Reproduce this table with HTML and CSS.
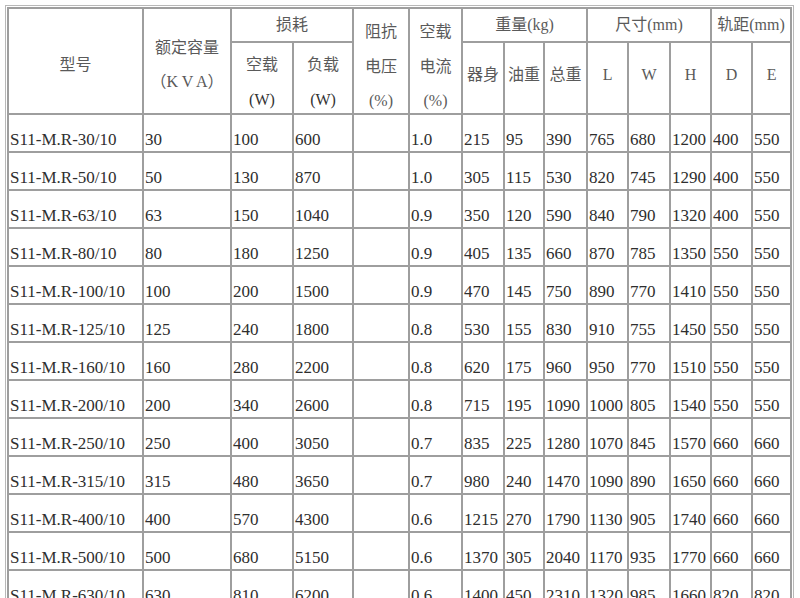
FILE: index.html
```html
<!DOCTYPE html>
<html lang="zh">
<head>
<meta charset="utf-8">
<title>S11-M.R 变压器参数表</title>
<link rel="stylesheet" href="styles.css">
</head>
<body>
<div class="frame">
<table class="spec">
<colgroup>
<col class="c-model"><col class="c-kva"><col class="c-nl"><col class="c-ll"><col class="c-imp"><col class="c-cur">
<col class="c-body"><col class="c-oil"><col class="c-tot"><col class="c-l"><col class="c-w"><col class="c-h"><col class="c-d"><col class="c-e">
</colgroup>
<thead>
<tr>
<th rowspan="2" class="hd tall"><span class="one">型号</span></th>
<th rowspan="2" class="hd tall"><span class="kva1">额定容量</span><span class="kva2">（K V A）</span></th>
<th colspan="2" class="hd top">损耗</th>
<th rowspan="2" class="hd tall"><span class="s1">阻抗</span><span class="s2">电压</span><span class="s3">(%)</span></th>
<th rowspan="2" class="hd tall"><span class="s1">空载</span><span class="s2">电流</span><span class="s3">(%)</span></th>
<th colspan="3" class="hd top">重量(kg)</th>
<th colspan="3" class="hd top">尺寸(mm)</th>
<th colspan="2" class="hd top">轨距(mm)</th>
</tr>
<tr>
<th class="hd sub2"><span class="w1">空载</span><span class="w2">(W)</span></th>
<th class="hd sub2"><span class="w1">负载</span><span class="w2">(W)</span></th>
<th class="hd sub">器身</th>
<th class="hd sub">油重</th>
<th class="hd sub">总重</th>
<th class="hd sub">L</th>
<th class="hd sub">W</th>
<th class="hd sub">H</th>
<th class="hd sub">D</th>
<th class="hd sub">E</th>
</tr>
</thead>
<tbody>
<tr><td>S11-M.R-30/10</td><td>30</td><td>100</td><td>600</td><td></td><td>1.0</td><td>215</td><td>95</td><td>390</td><td>765</td><td>680</td><td>1200</td><td>400</td><td>550</td></tr>
<tr><td>S11-M.R-50/10</td><td>50</td><td>130</td><td>870</td><td></td><td>1.0</td><td>305</td><td>115</td><td>530</td><td>820</td><td>745</td><td>1290</td><td>400</td><td>550</td></tr>
<tr><td>S11-M.R-63/10</td><td>63</td><td>150</td><td>1040</td><td></td><td>0.9</td><td>350</td><td>120</td><td>590</td><td>840</td><td>790</td><td>1320</td><td>400</td><td>550</td></tr>
<tr><td>S11-M.R-80/10</td><td>80</td><td>180</td><td>1250</td><td></td><td>0.9</td><td>405</td><td>135</td><td>660</td><td>870</td><td>785</td><td>1350</td><td>550</td><td>550</td></tr>
<tr><td>S11-M.R-100/10</td><td>100</td><td>200</td><td>1500</td><td></td><td>0.9</td><td>470</td><td>145</td><td>750</td><td>890</td><td>770</td><td>1410</td><td>550</td><td>550</td></tr>
<tr><td>S11-M.R-125/10</td><td>125</td><td>240</td><td>1800</td><td></td><td>0.8</td><td>530</td><td>155</td><td>830</td><td>910</td><td>755</td><td>1450</td><td>550</td><td>550</td></tr>
<tr><td>S11-M.R-160/10</td><td>160</td><td>280</td><td>2200</td><td></td><td>0.8</td><td>620</td><td>175</td><td>960</td><td>950</td><td>770</td><td>1510</td><td>550</td><td>550</td></tr>
<tr><td>S11-M.R-200/10</td><td>200</td><td>340</td><td>2600</td><td></td><td>0.8</td><td>715</td><td>195</td><td>1090</td><td>1000</td><td>805</td><td>1540</td><td>550</td><td>550</td></tr>
<tr><td>S11-M.R-250/10</td><td>250</td><td>400</td><td>3050</td><td></td><td>0.7</td><td>835</td><td>225</td><td>1280</td><td>1070</td><td>845</td><td>1570</td><td>660</td><td>660</td></tr>
<tr><td>S11-M.R-315/10</td><td>315</td><td>480</td><td>3650</td><td></td><td>0.7</td><td>980</td><td>240</td><td>1470</td><td>1090</td><td>890</td><td>1650</td><td>660</td><td>660</td></tr>
<tr><td>S11-M.R-400/10</td><td>400</td><td>570</td><td>4300</td><td></td><td>0.6</td><td>1215</td><td>270</td><td>1790</td><td>1130</td><td>905</td><td>1740</td><td>660</td><td>660</td></tr>
<tr><td>S11-M.R-500/10</td><td>500</td><td>680</td><td>5150</td><td></td><td>0.6</td><td>1370</td><td>305</td><td>2040</td><td>1170</td><td>935</td><td>1770</td><td>660</td><td>660</td></tr>
<tr><td>S11-M.R-630/10</td><td>630</td><td>810</td><td>6200</td><td></td><td>0.6</td><td>1400</td><td>450</td><td>2310</td><td>1320</td><td>985</td><td>1660</td><td>820</td><td>820</td></tr>
</tbody>
</table>
</div>
</body>
</html>
```

FILE: styles.css
```css
html, body {
  margin: 0;
  padding: 0;
  background: #fff;
}
body {
  width: 800px;
  height: 598px;
  overflow: hidden;
  font-family: "Liberation Serif", "Noto Sans CJK SC", serif;
  color: #2e2e2e;
}
.frame {
  margin: 5px 0 0 5px;
  border: 1px solid #b8b8b8;
  padding: 1px;
  width: max-content;
}
.spec {
  border-collapse: separate;
  border-spacing: 0;
  table-layout: fixed;
  width: 785px;
  border-left: 2px solid #9e9e9e;
  border-top: 2px solid #9e9e9e;
}
.spec th, .spec td {
  border-right: 2px solid #9e9e9e;
  border-bottom: 2px solid #9e9e9e;
  padding: 0;
  box-sizing: border-box;
  white-space: nowrap;
  overflow: visible;
}
.c-model { width: 135px; }
.c-kva { width: 88px; }
.c-nl { width: 62px; }
.c-ll { width: 60px; }
.c-imp { width: 56px; }
.c-cur { width: 53px; }
.c-body { width: 42px; }
.c-oil { width: 40px; }
.c-tot { width: 43px; }
.c-l { width: 41px; }
.c-w { width: 42px; }
.c-h { width: 41px; }
.c-d { width: 41px; }
.c-e { width: 39px; }

.hd {
  font-weight: normal;
  font-size: 16px;
  color: #5a5a5a;
  text-align: center;
}
.hd span { display: block; }
.tall { vertical-align: top; }
.top { line-height: 31px; padding-bottom: 2px; vertical-align: middle; }
.one { padding-top: 44px; line-height: 24px; }
.kva1 { padding-top: 22px; line-height: 34px; }
.kva2 { line-height: 34px; }
.s1 { padding-top: 5px; line-height: 35px; }
.s2 { line-height: 35px; }
.s3 { padding-top: 5px; line-height: 24px; }
.sub2 { vertical-align: top; }
.w1 { padding-top: 6px; line-height: 32px; }
.w2 { padding-top: 7px; line-height: 24px; color: #333; }
.sub { vertical-align: top; padding-top: 6px; line-height: 63px; }

.spec td {
  font-size: 17px;
  line-height: 20px;
  padding: 15px 0 1px 1px;
  text-align: left;
  vertical-align: top;
}
```
